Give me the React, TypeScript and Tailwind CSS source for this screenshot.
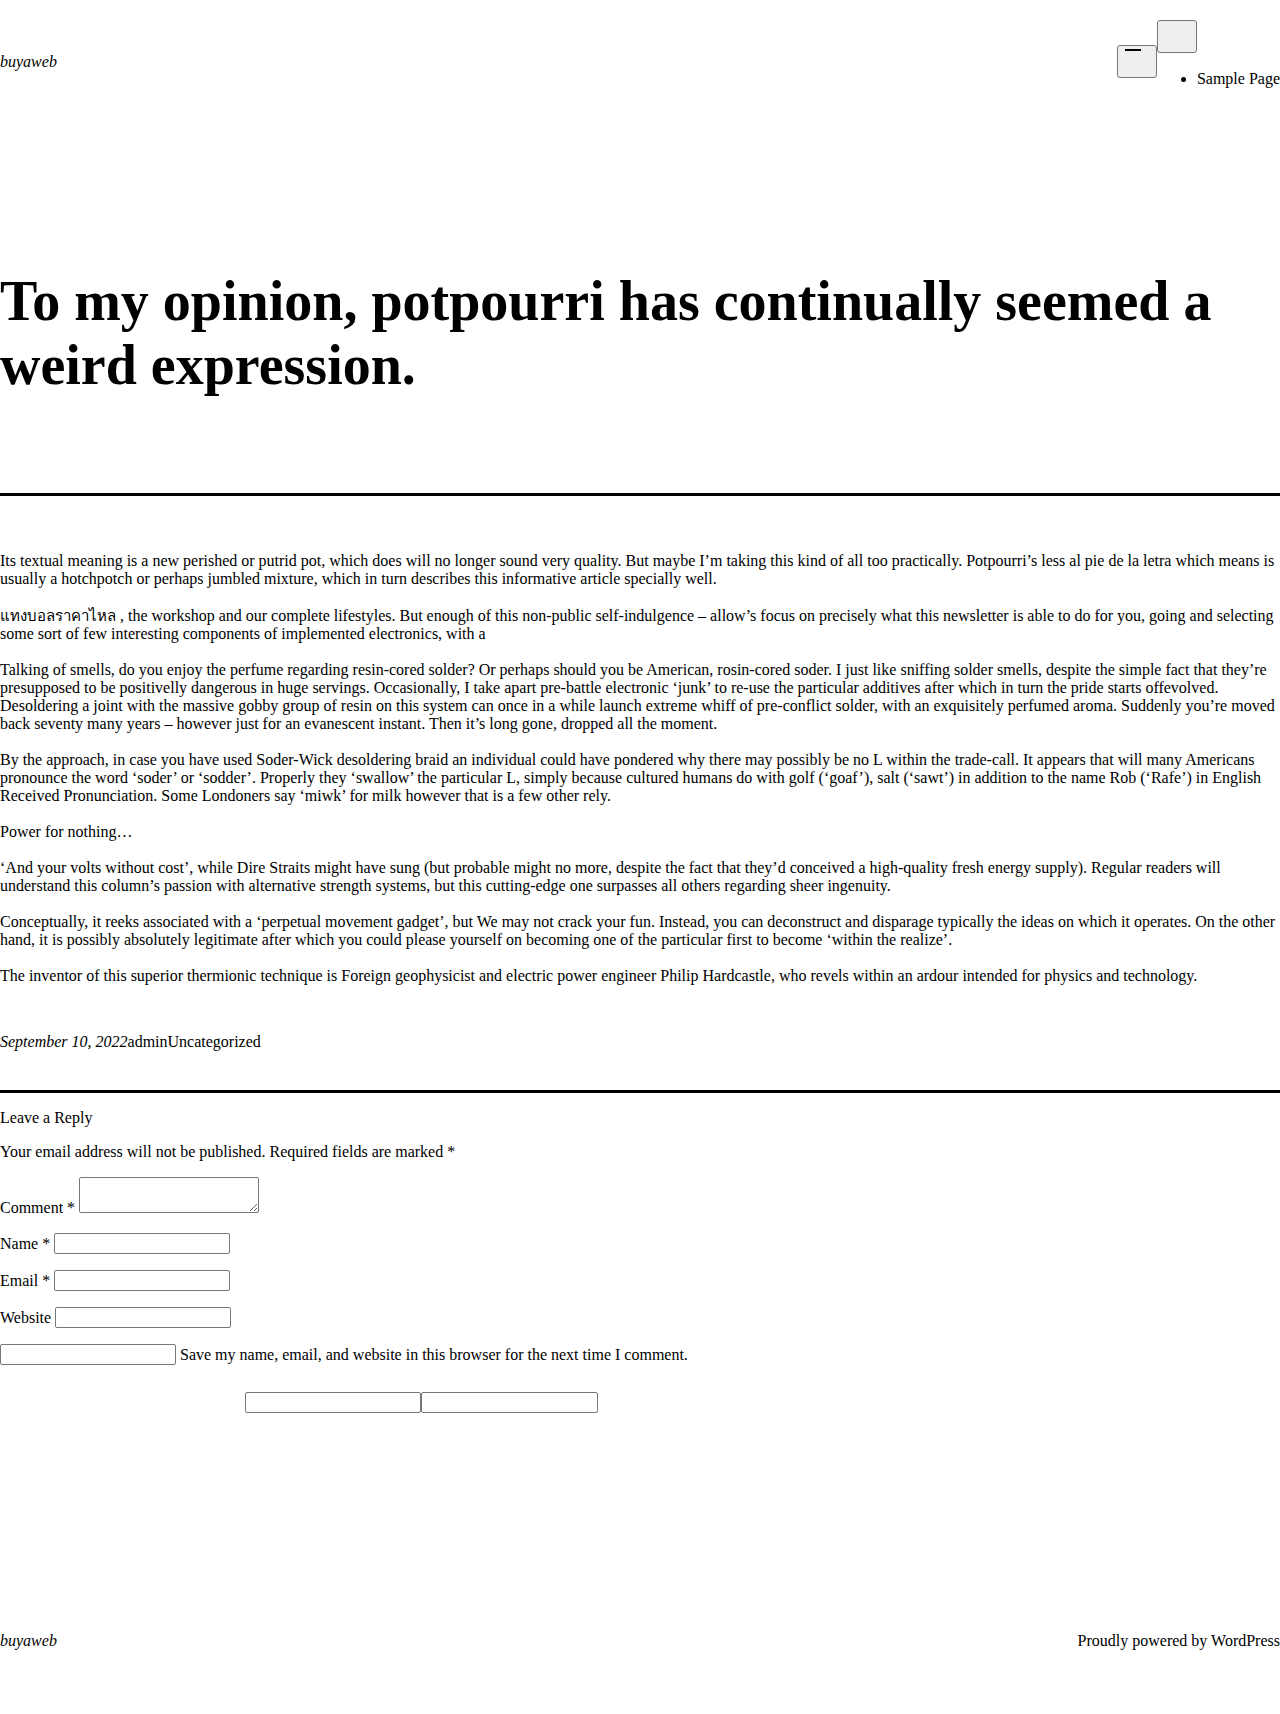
import React from "react";

const paras: React.ReactNode[] = [
  "Its textual meaning is a new perished or putrid pot, which does will no longer sound very quality. But maybe I’m taking this kind of all too practically. Potpourri’s less al pie de la letra which means is usually a hotchpotch or perhaps jumbled mixture, which in turn describes this informative article specially well.",
  <>
    <span className="text-[15px] leading-[0]">แทงบอลราคาไหล</span> , the workshop and our complete lifestyles. But enough of this non-public self-indulgence – allow’s focus on precisely what this newsletter is able to do for you, going and selecting some sort of few interesting components of implemented electronics, with a
  </>,
  "Talking of smells, do you enjoy the perfume regarding resin-cored solder? Or perhaps should you be American, rosin-cored soder. I just like sniffing solder smells, despite the simple fact that they’re presupposed to be positivelly dangerous in huge servings. Occasionally, I take apart pre-battle electronic ‘junk’ to re-use the particular additives after which in turn the pride starts offevolved. Desoldering a joint with the massive gobby group of resin on this system can once in a while launch extreme whiff of pre-conflict solder, with an exquisitely perfumed aroma. Suddenly you’re moved back seventy many years – however just for an evanescent instant. Then it’s long gone, dropped all the moment.",
  "By the approach, in case you have used Soder-Wick desoldering braid an individual could have pondered why there may possibly be no L within the trade-call. It appears that will many Americans pronounce the word ‘soder’ or ‘sodder’. Properly they ‘swallow’ the particular L, simply because cultured humans do with golf (‘goaf’), salt (‘sawt’) in addition to the name Rob (‘Rafe’) in English Received Pronunciation. Some Londoners say ‘miwk’ for milk however that is a few other rely.",
  "Power for nothing…",
  "‘And your volts without cost’, while Dire Straits might have sung (but probable might no more, despite the fact that they’d conceived a high-quality fresh energy supply). Regular readers will understand this column’s passion with alternative strength systems, but this cutting-edge one surpasses all others regarding sheer ingenuity.",
  "Conceptually, it reeks associated with a ‘perpetual movement gadget’, but We may not crack your fun. Instead, you can deconstruct and disparage typically the ideas on which it operates. On the other hand, it is possibly absolutely legitimate after which you could please yourself on becoming one of the particular first to become ‘within the realize’.",
  "The inventor of this superior thermionic technique is Foreign geophysicist and electric power engineer Philip Hardcastle, who revels within an ardour intended for physics and technology.",
];

const inputCls =
  "h-[21px] w-[176px] border border-[#767676] rounded-[2px] bg-white";

export default function App() {
  return (
    <div className="font-['Liberation_Serif','Noto_Sans',serif] text-[16px] leading-[normal] text-black bg-white min-h-[1714px] flex flex-col">
      {/* Header */}
      <header className="flex justify-between items-start pt-[20px]">
        <div className="mt-[33px] italic">buyaweb</div>
        <nav className="flex items-start">
          <button className="mt-[25px] w-[40px] h-[33px] bg-[#efefef] border border-[#767676] rounded-[3px] flex items-start justify-start pt-[3px] pl-[7px]">
            <span className="block w-[16px] h-[2px] bg-black" />
          </button>
          <div className="flex flex-col">
            <button className="w-[40px] h-[33px] bg-[#efefef] border border-[#767676] rounded-[3px]" />
            <ul className="list-disc pl-[40px] mt-[17px]">
              <li>Sample Page</li>
            </ul>
          </div>
        </nav>
      </header>

      {/* Title */}
      <h1 className="mt-[181px] text-[56px] font-bold">
        To my opinion, potpourri has continually seemed a weird expression.
      </h1>

      <div className="mt-[96px] h-[3px] bg-black" />

      {/* Content */}
      <div className="mt-[56px] flex flex-col gap-[18px]">
        <p>{paras[0]}</p>
        <p className="pt-[1px]">{paras[1]}</p>
        {paras.slice(2).map((p, i) => (
          <p key={i}>{p}</p>
        ))}
      </div>

      <div className="mt-[48px]">
        <span className="italic">September 10, 2022</span>
        <span>admin</span>
        <span>Uncategorized</span>
      </div>

      <div className="mt-[39px] h-[3px] bg-black" />

      {/* Comments */}
      <div className="mt-4">Leave a Reply</div>
      <p className="mt-4">
        Your email address will not be published. Required fields are marked *
      </p>
      <div className="mt-4 flex items-start">
        <label className="mt-[22px] mr-[4px]">Comment *</label>
        <textarea className="w-[180px] h-[36px] border border-[#767676] rounded-[2px] bg-white" />
      </div>
      <div className="mt-4 flex items-center">
        <label className="mr-[4px]">Name *</label>
        <input type="text" className={inputCls} />
      </div>
      <div className="mt-4 flex items-center">
        <label className="mr-[4px]">Email *</label>
        <input type="text" className={inputCls} />
      </div>
      <div className="mt-4 flex items-center">
        <label className="mr-[4px]">Website</label>
        <input type="text" className={inputCls} />
      </div>
      <div className="mt-4 flex items-center">
        <input type="text" className="h-[21px] w-[176px] border border-[#767676] rounded-[2px] bg-white mr-[4px]" />
        <label>
          Save my name, email, and website in this browser for the next time I comment.
        </label>
      </div>
      <div className="mt-[27px] flex pl-[245px]">
        <input type="text" className="h-[21px] w-[176px] border border-[#767676] rounded-[2px] bg-white" />
        <input type="text" className="h-[21px] w-[177px] border border-[#767676] rounded-[2px] bg-white" />
      </div>

      {/* Footer */}
      <footer className="mt-[219px] flex justify-between items-center">
        <div className="italic">buyaweb</div>
        <div>Proudly powered by WordPress</div>
      </footer>
    </div>
  );
}
